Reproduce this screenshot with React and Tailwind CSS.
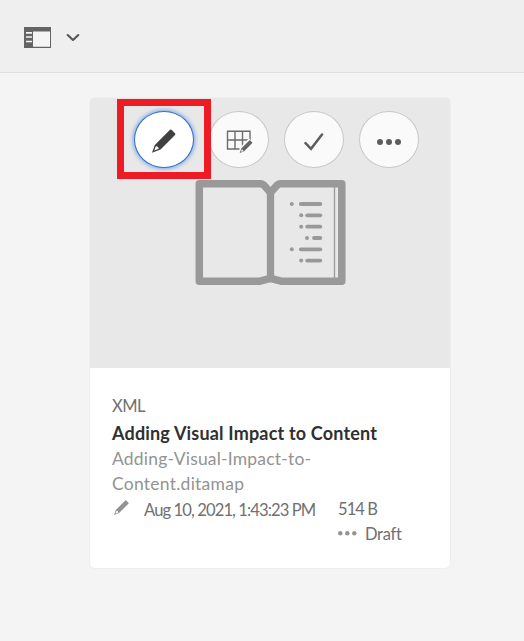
function Pencil({ className }) {
  return (
    <svg className={className} viewBox="0 0 24 24">
      <path fill="currentColor" fillRule="evenodd" d="M18 .8Q18.8 0 19.6.8L23.2 4.5Q23.8 5.2 23 6L8.5 20.5 0 23.8 2.8 16ZM4 17 2.2 21.5 6.8 19.8Q6.6 17.5 4 17Z" />
    </svg>
  );
}

function GridEdit() {
  return (
    <svg width="28" height="28" viewBox="0 0 28 28" fill="none">
      <g transform="translate(1.5 2)">
        <path d="M.3 3.3H24.2M.3 12H24M.3 21H13M1 3V21.5M8.5 3V21.5M16 3V19M23.5 3V12" stroke="#6b6b6b" strokeWidth="1.4" />
        <path d="M12 25.7 14 19 22.5 10.5 27 15 17 25Z" fill="#fafafa" />
        <path fillRule="evenodd" d="M22.8 12.4Q23.3 12 23.8 12.5L26 14.7 17.7 23.2 13.2 25.1 14.8 20.6ZM15.5 21.1 14.3 24.1 17 22.9Z" fill="#636363" />
      </g>
    </svg>
  );
}

function ActionButton({ active, children }) {
  return (
    <button
      className={
        "flex h-[57px] w-[60px] items-center justify-center rounded-[50%] border text-[#5d5d5d] " +
        (active
          ? "border-[#326ec8] bg-white shadow-[0_0_4px_1px_#75a5e8]"
          : "border-[#c8c8c8] bg-[#fafafa]")
      }
    >
      {children}
    </button>
  );
}

const outline = [
  [291.8, 299.8, 204],
  [301.2, 306.2, 215.3],
  [301.2, 306.2, 226.7],
  [307, 313, 238],
  [291.8, 299.8, 249.3],
  [301.2, 306.2, 260.6],
];

function Book() {
  return (
    <svg className="absolute left-[105px] top-[82px]" width="151" height="106" viewBox="195 180 151 106" fill="none">
      <path d="M199.3 183.8H260.5Q263 183.8 265.5 187L270.5 192.5 275.5 187Q278 183.8 280.5 183.8H341.8V281.2H281L270.5 278.3 260 281.2H199.3Z" stroke="#999" strokeWidth="7.5" strokeLinejoin="round" />
      <path d="M270.5 188V282" stroke="#999" strokeWidth="7.3" />
      <path d="M334.5 186V279" stroke="#999" strokeWidth="1.3" />
      {outline.map(([dot, start, y]) => (
        <g key={y}>
          <circle cx={dot} cy={y} r="2" fill="#999" />
          <path d={`M${start + 1} ${y}H320.3`} stroke="#999" strokeWidth="3.8" strokeLinecap="round" />
        </g>
      ))}
    </svg>
  );
}

export default function App() {
  return (
    <div className="h-[641px] w-[524px] overflow-hidden bg-[#f4f4f4] font-['Lato',sans-serif] text-[17px] leading-[25px] text-[#707070]">
      <header className="flex h-[73px] items-start border-b border-[#e0e0e0] bg-[#efefef] pl-6 pt-[27px]">
        <svg width="27" height="21" viewBox="0 0 27 21">
          <path fill="#646464" d="M0 0H27V21H0Z" />
          <path fill="#f5f5f5" d="M9 4.5H26V19.7H9ZM2 5H8V6.7H2ZM2 9.2H8V10.8H2ZM2 13.7H8V15.3H2Z" />
        </svg>
        <svg className="ml-[15px] mt-[6px]" width="14" height="10" viewBox="0 0 14 10">
          <path d="M1.7 2 7 7 12.3 2" fill="none" stroke="#555" strokeWidth="2.1" strokeLinecap="round" strokeLinejoin="round" />
        </svg>
      </header>

      <main className="pl-[90px] pt-[25px]">
        <article className="h-[470px] w-[360px] rounded-[5px] bg-white shadow-[0_0_1px_1px_#eeeeee]">
          <div className="relative h-[270px] rounded-t-[4px] bg-[#e8e8e8]">
            <Book />
            <div className="flex gap-[15px] pl-[43.5px] pt-[13px]">
              <ActionButton active>
                <Pencil className="mt-[3px] h-6 w-6 text-[#404040]" />
              </ActionButton>
              <ActionButton>
                <GridEdit />
              </ActionButton>
              <ActionButton>
                <svg className="mt-1" width="20" height="18" viewBox="0 0 20 18">
                  <path d="M1.5 10.2 7 15.8 18 1.5" fill="none" stroke="#5d5d5d" strokeWidth="2.5" strokeLinecap="round" />
                </svg>
              </ActionButton>
              <ActionButton>
                <svg className="mt-1" width="26" height="8" viewBox="0 0 26 8" fill="currentColor">
                  <circle cx="4" cy="4" r="3" />
                  <circle cx="13" cy="4" r="3" />
                  <circle cx="22" cy="4" r="3" />
                </svg>
              </ActionButton>
            </div>
            <div className="absolute left-[27px] top-px h-[80px] w-[94px] border-[7px] border-[#ed1c24]" />
          </div>

          <div className="whitespace-nowrap pl-[22px] pt-[26px]">
            <p className="mb-[2px] text-[16.5px] tracking-[-0.5px]">XML</p>
            <h2 className="text-[18px] font-bold tracking-[0.18px] text-[#303030]">Adding Visual Impact to Content</h2>
            <p className="text-[17.5px] tracking-[0.2px] text-[#939393]">
              Adding-Visual-Impact-to-<br />
              <span className="tracking-[0.25px]">Content.ditamap</span>
            </p>
            <div className="flex">
              <Pencil className="ml-[2px] mt-[4px] h-[15px] w-[15px] text-[#939393]" />
              <span className="ml-[15px] mt-[2px] w-[194px] text-[16.6px] tracking-[-0.9px]">Aug 10, 2021, 1:43:23 PM</span>
              <div className="mt-px text-[16.5px]">
                <p className="tracking-[-0.9px]">514 B</p>
                <p className="flex items-center">
                  <svg width="20" height="8" viewBox="0 0 20 8" fill="#939393">
                    <circle cx="2.3" cy="2.2" r="2.2" />
                    <circle cx="9.3" cy="2.2" r="2.2" />
                    <circle cx="16.3" cy="2.2" r="2.2" />
                  </svg>
                  <span className="ml-[7px] tracking-[-0.3px]">Draft</span>
                </p>
              </div>
            </div>
          </div>
        </article>
      </main>
    </div>
  );
}
